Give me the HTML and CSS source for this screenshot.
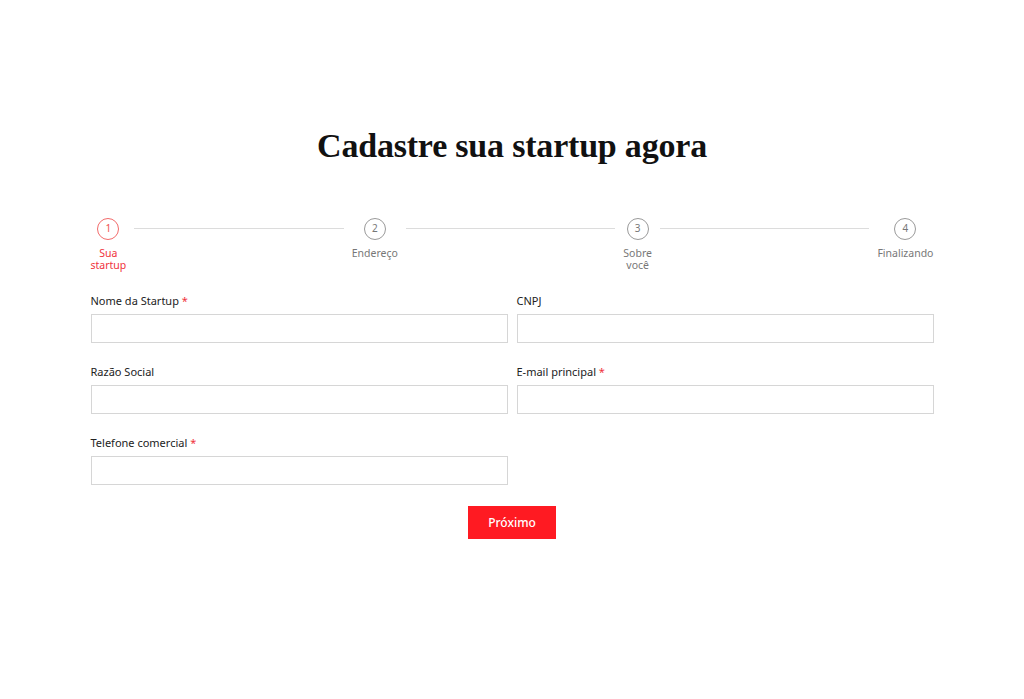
FILE: index.html
```html
<!DOCTYPE html>
<html lang="pt-BR">
<head>
<meta charset="utf-8">
<title>Cadastre sua startup agora</title>
<link rel="stylesheet" href="styles.css">
</head>
<body>
<main class="page">
  <h1 class="title">Cadastre sua startup agora</h1>
  <ol class="stepper">
    <li class="step active"><span class="dot">1</span><span class="step-label">Sua startup</span></li>
    <li class="line"></li>
    <li class="step"><span class="dot">2</span><span class="step-label">Endereço</span></li>
    <li class="line"></li>
    <li class="step"><span class="dot">3</span><span class="step-label">Sobre você</span></li>
    <li class="line"></li>
    <li class="step"><span class="dot">4</span><span class="step-label">Finalizando</span></li>
  </ol>
  <form class="form">
    <div class="grid">
      <label class="field"><span class="label">Nome da Startup <em>*</em></span><input class="input" type="text"></label>
      <label class="field"><span class="label">CNPJ</span><input class="input" type="text"></label>
      <label class="field"><span class="label">Razão Social</span><input class="input" type="text"></label>
      <label class="field"><span class="label">E-mail principal <em>*</em></span><input class="input" type="text"></label>
      <label class="field"><span class="label">Telefone comercial <em>*</em></span><input class="input" type="text"></label>
    </div>
    <div class="actions"><button class="btn" type="button">Próximo</button></div>
  </form>
</main>
</body>
</html>
```
FILE: styles.css
```css
* { box-sizing: border-box; }
html, body { margin: 0; padding: 0; background: #fff; }
body { font-family: "Noto Sans", "Liberation Sans", sans-serif; color: #333; }
.page { width: 843px; margin: 0 auto; padding-top: 124px; }
.title {
  font-family: "Liberation Serif", "Times New Roman", serif;
  font-weight: 700;
  font-size: 34px;
  line-height: 44px;
  text-align: center;
  margin: 0 0 50px;
  color: #111;
  letter-spacing: -0.2px;
}
.stepper { list-style: none; margin: 0; padding: 0; display: flex; align-items: flex-start; }
.step { width: min-content; display: flex; flex-direction: column; align-items: center; flex: none; }
.dot {
  width: 22px; height: 22px; border-radius: 50%;
  border: 1.5px solid #9a9a9a; color: #777;
  font-size: 10px; line-height: 19px; text-align: center;
}
.step-label { margin-top: 7px; font-size: 10.5px; line-height: 12px; color: #777; text-align: center; }
.step.active .dot { border-color: #f26b6b; color: #f05050; }
.step.active .step-label { color: #f0323c; }
.line { flex: 1; height: 1px; background: #dcdcdc; margin: 10px 8px 0; }
.form { margin-top: 23px; }
.grid { display: grid; grid-template-columns: 1fr 1fr; column-gap: 9px; row-gap: 22px; }
.field { display: flex; flex-direction: column; }
.label { font-size: 11px; line-height: 14px; color: #222; margin-bottom: 6px; }
.label em { font-style: normal; color: #f0323c; }
.input { height: 29px; border: 1.5px solid #d6d6d6; background: #fff; font: inherit; }
.actions { display: flex; justify-content: center; margin-top: 21px; }
.btn {
  width: 88px; height: 33px; border: 0; background: #ff1a22; color: #fff;
  font-family: inherit; font-size: 12px; font-weight: 500;
}
```
